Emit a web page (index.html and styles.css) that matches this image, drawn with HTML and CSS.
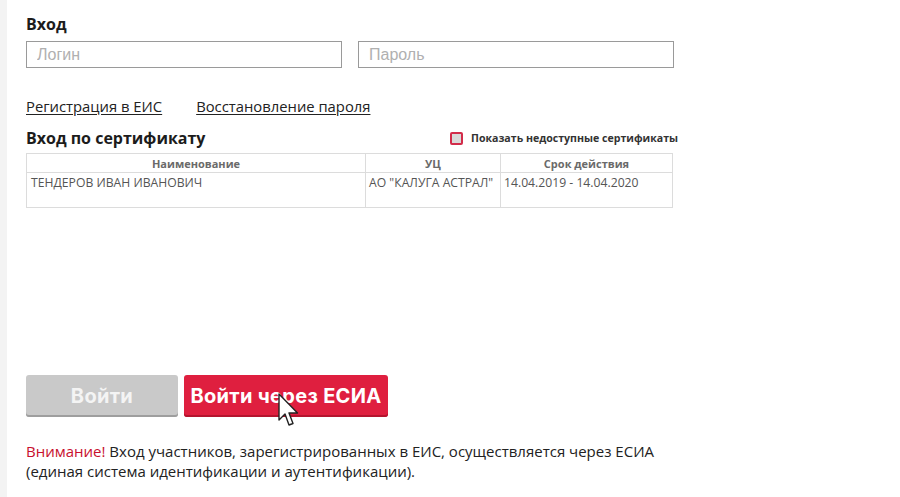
FILE: index.html
```html
<!DOCTYPE html>
<html lang="ru">
  <head>
    <meta charset="UTF-8" />
    <title>Вход</title>
    <link rel="stylesheet" href="styles.css">
  </head>
  <body>
    <div class="page">
      <h2 class="title">Вход</h2>
      <div class="login-row">
        <input type="text" class="field" placeholder="Логин" />
        <input type="password" class="field" placeholder="Пароль" />
      </div>

      <div class="links">
        <a href="#">Регистрация в ЕИС</a>
        <a href="#">Восстановление пароля</a>
      </div>

      <div class="cert-head">
        <h2 class="title">Вход по сертификату</h2>
        <label class="show-all">
          <span class="check"></span>
          Показать недоступные сертификаты
        </label>
      </div>

      <table class="cert-table">
        <thead>
          <tr>
            <th class="col-name">Наименование</th>
            <th class="col-ca">УЦ</th>
            <th class="col-date">Срок действия</th>
          </tr>
        </thead>
        <tbody>
          <tr>
            <td>ТЕНДЕРОВ ИВАН ИВАНОВИЧ</td>
            <td>АО "КАЛУГА АСТРАЛ"</td>
            <td>14.04.2019 - 14.04.2020</td>
          </tr>
        </tbody>
      </table>

      <div class="buttons">
        <button class="btn btn-disabled">Войти</button>
        <button class="btn btn-esia">Войти через ЕСИА</button>
        <svg class="cursor" width="22" height="36" viewBox="0 0 22 36">
          <path d="M1 1 L1 27 L7 21 L11 32 L15 30.5 L11 20 L19.5 20 Z" fill="#fff" stroke="#222" stroke-width="1.4" stroke-linejoin="round" />
        </svg>
      </div>

      <p class="note">
        <span class="warn">Внимание!</span> Вход участников, зарегистрированных в ЕИС, осуществляется через ЕСИА<br />
        (единая система идентификации и аутентификации).
      </p>
    </div>
  </body>
</html>
```

FILE: styles.css
```css
/* General Styling */
body {
  margin: 0;
  font-family: "Open Sans", Arial, sans-serif;
  background-color: #fff;
  color: #222;
}
.page {
  min-height: 497px;
  box-sizing: border-box;
  border-left: 7px solid #f3f3f3;
  padding: 13px 0 0 19px;
}
.title {
  margin: 0;
  font-size: 16px;
  line-height: 22px;
  font-weight: 700;
  color: #1c1c1c;
}
.login-row {
  display: flex;
  gap: 16px;
  margin-top: 6px;
}
.field {
  width: 316px;
  height: 27px;
  box-sizing: border-box;
  border: 1px solid #9a9a9a;
  padding: 0 10px;
  font-family: "Liberation Sans", Arial, sans-serif;
  font-size: 16px;
  outline: none;
}
.field::placeholder {
  color: #b0b0b0;
}
.links {
  display: flex;
  gap: 34px;
  margin-top: 28px;
}
.links a {
  font-size: 14.8px;
  line-height: 20px;
  color: #222;
  text-decoration: underline;
  text-underline-offset: 2px;
}
.cert-head {
  display: flex;
  justify-content: space-between;
  align-items: center;
  width: 652px;
  margin-top: 11px;
}
.show-all {
  display: flex;
  align-items: center;
  gap: 8px;
  font-size: 10.6px;
  font-weight: 700;
  color: #333;
}
.check {
  width: 9px;
  height: 9px;
  border: 2px solid #d22c4a;
  border-radius: 2px;
  background-color: #d9d9d9;
}
.cert-table {
  width: 647px;
  table-layout: fixed;
  border-collapse: collapse;
  margin-top: 4px;
  font-size: 12.2px;
  color: #555;
}
.cert-table th,
.cert-table td {
  border: 1px solid #dcdcdc;
  white-space: nowrap;
  overflow: hidden;
}
.cert-table th {
  height: 18px;
  padding: 0;
  font-size: 11px;
  font-weight: 700;
  color: #6a6a6a;
}
.cert-table td {
  height: 32px;
  padding: 1px 4px;
  vertical-align: top;
}
.cert-table td + td {
  padding: 1px 3px;
}
.col-name {
  width: 338px;
}
.col-ca {
  width: 134px;
}
.buttons {
  position: relative;
  display: flex;
  gap: 6px;
  margin-top: 167px;
}
.btn {
  height: 42px;
  border: none;
  border-radius: 3px;
  font-family: Inter, "Open Sans", sans-serif;
  font-size: 20px;
  font-weight: 700;
  letter-spacing: 0.3px;
  color: #fff;
  cursor: pointer;
}
.btn-disabled {
  width: 152px;
  background-color: #c9c9c9;
  color: #f4f4f4;
  box-shadow: inset 0 -2px 0 #9e9e9e;
}
.btn-esia {
  width: 204px;
  background-color: #df1f3f;
  box-shadow: inset 0 -2px 0 #b4142e;
}
.cursor {
  position: absolute;
  left: 252px;
  top: 18px;
}
.note {
  margin: 24px 0 0;
  font-size: 15px;
  line-height: 20px;
  color: #222;
}
.warn {
  color: #c8102e;
}
```
